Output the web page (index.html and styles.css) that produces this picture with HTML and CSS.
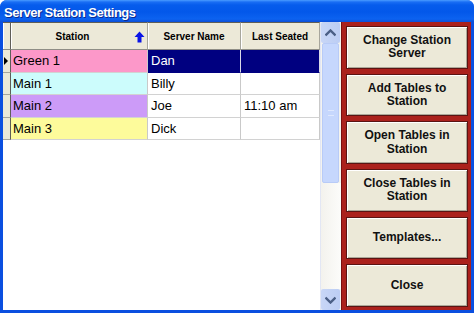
FILE: index.html
```html
<!DOCTYPE html>
<html>
<head>
<meta charset="utf-8">
<link rel="stylesheet" href="styles.css">
</head>
<body>
<div class="window">
  <div class="titlebar"><span class="title">Server Station Settings</span></div>
  <div class="body">
    <div class="grid-wrap">
      <div class="grid">
        <div class="hcell ind"></div>
        <div class="hcell station"><span class="hlabel">Station</span><svg class="sort" width="11" height="12" viewBox="0 0 11 12"><path d="M5.5 0.5 L10.5 6 L7.5 6 L7.5 11.5 L3.5 11.5 L3.5 6 L0.5 6 Z" fill="#0a14e6"/></svg></div>
        <div class="hcell">Server Name</div>
        <div class="hcell">Last Seated</div>

        <div class="cell ind"><svg class="tri" width="4" height="8" viewBox="0 0 4 8"><path d="M0 0 L4 4 L0 8 Z" fill="#000"/></svg></div>
        <div class="cell st pink">Green 1</div>
        <div class="cell sel">Dan</div>
        <div class="cell sel"></div>

        <div class="cell ind"></div>
        <div class="cell st cyan">Main 1</div>
        <div class="cell">Billy</div>
        <div class="cell"></div>

        <div class="cell ind"></div>
        <div class="cell st lav">Main 2</div>
        <div class="cell">Joe</div>
        <div class="cell">11:10 am</div>

        <div class="cell ind"></div>
        <div class="cell st yel">Main 3</div>
        <div class="cell">Dick</div>
        <div class="cell"></div>
      </div>
    </div>
    <div class="vscroll">
      <div class="sbtn"><svg width="11" height="8" viewBox="0 0 11 8"><path d="M0.5 6.5 L5.5 1.5 L10.5 6.5" fill="none" stroke="#4b5f86" stroke-width="2.4"/></svg></div>
      <div class="thumb"><span class="grip"></span></div>
      <div class="track"></div>
      <div class="sbtn"><svg width="11" height="8" viewBox="0 0 11 8"><path d="M0.5 1.5 L5.5 6.5 L10.5 1.5" fill="none" stroke="#4b5f86" stroke-width="2.4"/></svg></div>
    </div>
    <div class="actions">
      <button class="act">Change Station<br>Server</button>
      <button class="act">Add Tables to<br>Station</button>
      <button class="act">Open Tables in<br>Station</button>
      <button class="act">Close Tables in<br>Station</button>
      <button class="act">Templates...</button>
      <button class="act">Close</button>
    </div>
  </div>
</div>
</body>
</html>
```

FILE: styles.css
```css
html, body {
  margin: 0;
  padding: 0;
  background: #ffffff;
}
.window {
  width: 474px;
  height: 313px;
  box-sizing: border-box;
  background: #0b4fe0;
  border-radius: 7px 7px 0 0;
  display: flex;
  flex-direction: column;
  overflow: hidden;
  font-family: "Liberation Sans", Arial, sans-serif;
}
.titlebar {
  height: 22px;
  flex: none;
  display: flex;
  align-items: center;
  padding-left: 4px;
  background: linear-gradient(to bottom, #4a9cff 0px, #1a6ef4 2px, #065cec 5px, #0358ea 12px, #0c62f0 19px, #0c4fd8 22px);
}
.title {
  color: #ffffff;
  font-weight: bold;
  font-size: 13px;
  letter-spacing: -0.5px;
  text-shadow: 1px 1px 0 #0a2a90;
  padding-top: 2px;
}
.body {
  flex: 1;
  display: flex;
  padding: 0 3px 3px 3px;
  min-height: 0;
}
.grid-wrap {
  width: 317px;
  background: #ffffff;
  flex: none;
}
.grid {
  display: grid;
  grid-template-columns: 8px 137px 93px 79px;
  grid-template-rows: 28px repeat(4, 22.5px);
}
.hcell {
  background: #ece9d8;
  box-sizing: border-box;
  border-right: 1px solid #a7a69c;
  border-bottom: 1px solid #8f8e86;
  border-top: 1px solid #5f5e58;
  box-shadow: inset 1px 0 0 #ffffff;
  font-size: 10px;
  font-weight: bold;
  color: #000;
  display: flex;
  align-items: center;
  justify-content: center;
}
.hcell.ind {
  border-right: 1px solid #5f5e58;
}
.hcell.station {
  justify-content: flex-start;
  padding-right: 2px;
}
.hlabel {
  flex: 1;
  text-align: center;
}
.sort {
  display: block;
  margin-top: 1px;
}
.cell {
  box-sizing: border-box;
  border-right: 1px solid #c9c9c9;
  border-bottom: 1px solid #d2d2d2;
  font-size: 13px;
  color: #000;
  padding-left: 3px;
  display: flex;
  align-items: center;
  white-space: nowrap;
}
.cell.ind {
  background: #ece9d8;
  border-right: 1px solid #5f5e58;
  border-bottom: 1px solid #a7a69c;
  padding-left: 1px;
}
.cell.st {
  padding-left: 2px;
}
.pink { background: #fc98c9; }
.cyan { background: #ccfcfc; }
.lav { background: #cc9bf8; }
.yel { background: #fdfb9b; }
.sel {
  background: #000080;
  color: #ffffff;
  border-right: 1px solid #d8d8e8;
  border-bottom: 1px solid #000080;
}
.vscroll {
  width: 21px;
  flex: none;
  display: flex;
  flex-direction: column;
  background: #f4f3ee;
  border-left: 1px solid #e2e6f4;
  box-sizing: border-box;
}
.sbtn {
  height: 21px;
  flex: none;
  display: flex;
  align-items: center;
  justify-content: center;
  background: linear-gradient(to right, #c8d6f6, #bccdf4);
  border-radius: 2px;
  margin: 0 1px 0 0;
}
.thumb {
  height: 140px;
  flex: none;
  margin: 0 2px 0 1px;
  background: #c6d7fd;
  border: 1px solid #b8cbf7;
  border-radius: 2px;
  box-sizing: border-box;
  display: flex;
  align-items: center;
  justify-content: center;
}
.grip {
  width: 6px;
  height: 6px;
  border-top: 1px solid #dfe8fe;
  border-bottom: 1px solid #dfe8fe;
  box-sizing: border-box;
}
.track {
  flex: 1;
  background: linear-gradient(to right, #f3f2ed, #fcfcfa);
}
.actions {
  flex: 1;
  background: #ab211c;
  box-shadow: inset 1px 0 0 #7a1010;
  display: flex;
  flex-direction: column;
  gap: 5px;
  padding: 4px 3px 3px 5px;
}
.act {
  flex: 1;
  margin: 0;
  background: #ece9d8;
  border: 1px solid #5a1412;
  box-shadow: inset 1px 1px 0 #ffffff, inset -1px -1px 0 #aca899;
  font-family: "Liberation Sans", Arial, sans-serif;
  font-size: 12px;
  font-weight: bold;
  line-height: 13.5px;
  color: #111;
  padding: 0;
}
```
